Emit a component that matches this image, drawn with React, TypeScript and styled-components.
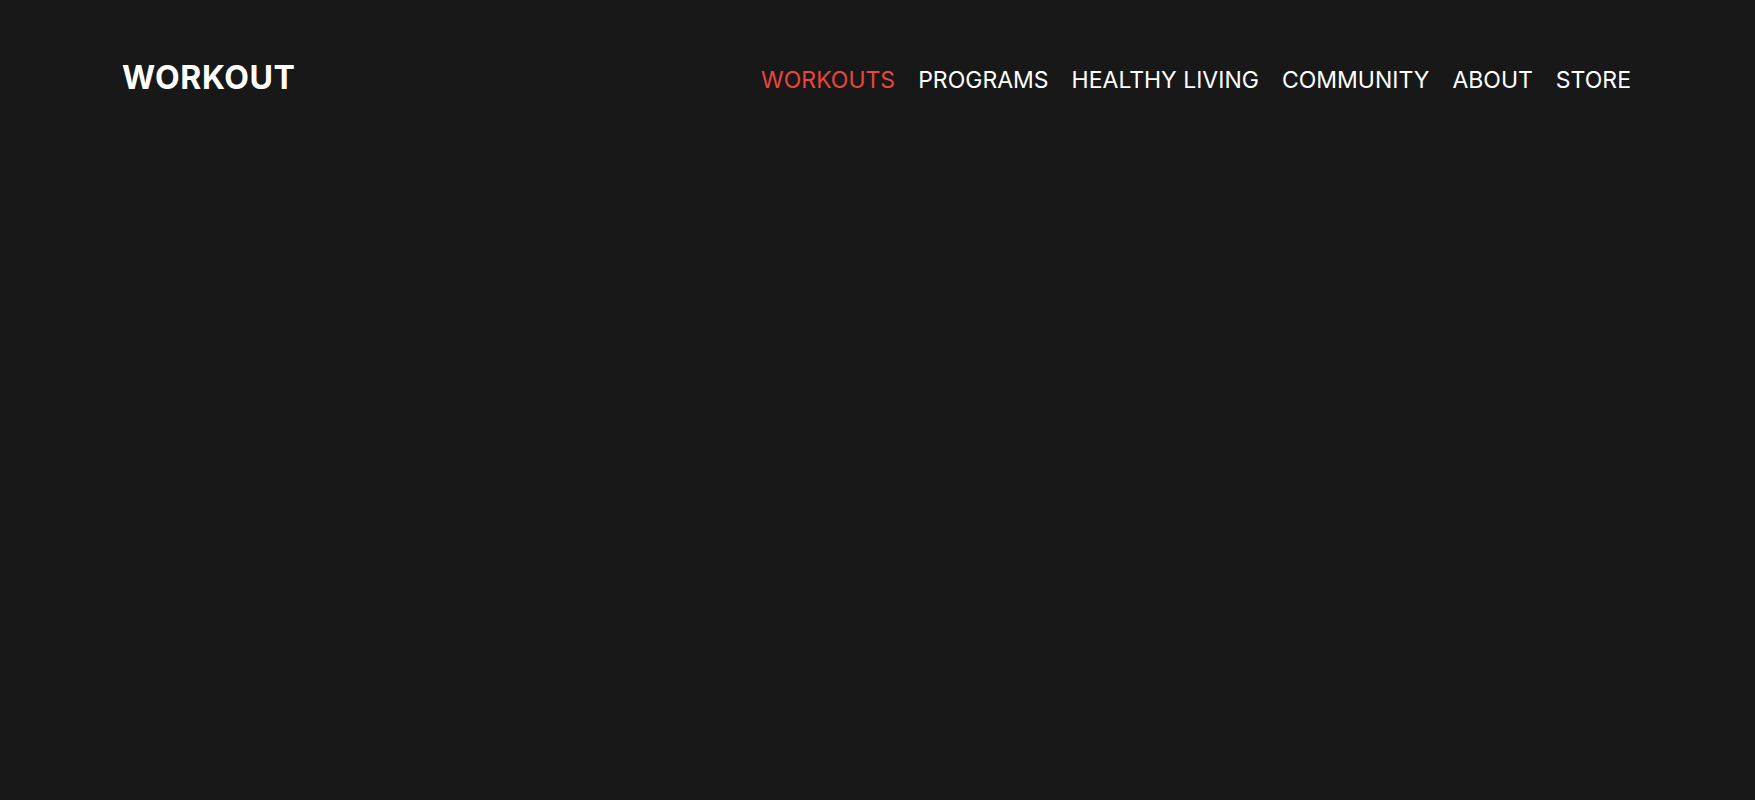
import React from "react";
import styled, { createGlobalStyle } from "styled-components";

const Global = createGlobalStyle`
  html, body { margin: 0; padding: 0; background: #181818; }
  body { font-family: Inter, "Noto Sans", sans-serif; }
`;

const Page = styled.div`
  min-height: 800px;
  background: #181818;
`;

const Header = styled.header`
  display: flex;
  align-items: flex-start;
  justify-content: space-between;
  padding: 58px 124px 0 122px;
`;

const Logo = styled.a`
  font-size: 32px;
  font-weight: 700;
  color: #ffffff;
  text-decoration: none;
  letter-spacing: 0.6px;
  line-height: 40px;
`;

const Nav = styled.nav`
  display: flex;
  gap: 23px;
  padding-top: 7px;
`;

const NavLink = styled.a<{ $active?: boolean }>`
  font-size: 23px;
  font-weight: 400;
  line-height: 30px;
  letter-spacing: 0;
  color: ${(p) => (p.$active ? "#e8473b" : "#ffffff")};
  text-decoration: none;
`;

const links = ["WORKOUTS", "PROGRAMS", "HEALTHY LIVING", "COMMUNITY", "ABOUT", "STORE"];

export default function App() {
  return (
    <Page>
      <Global />
      <Header>
        <Logo href="#">WORKOUT</Logo>
        <Nav>
          {links.map((l, i) => (
            <NavLink key={l} href="#" $active={i === 0}>
              {l}
            </NavLink>
          ))}
        </Nav>
      </Header>
    </Page>
  );
}
